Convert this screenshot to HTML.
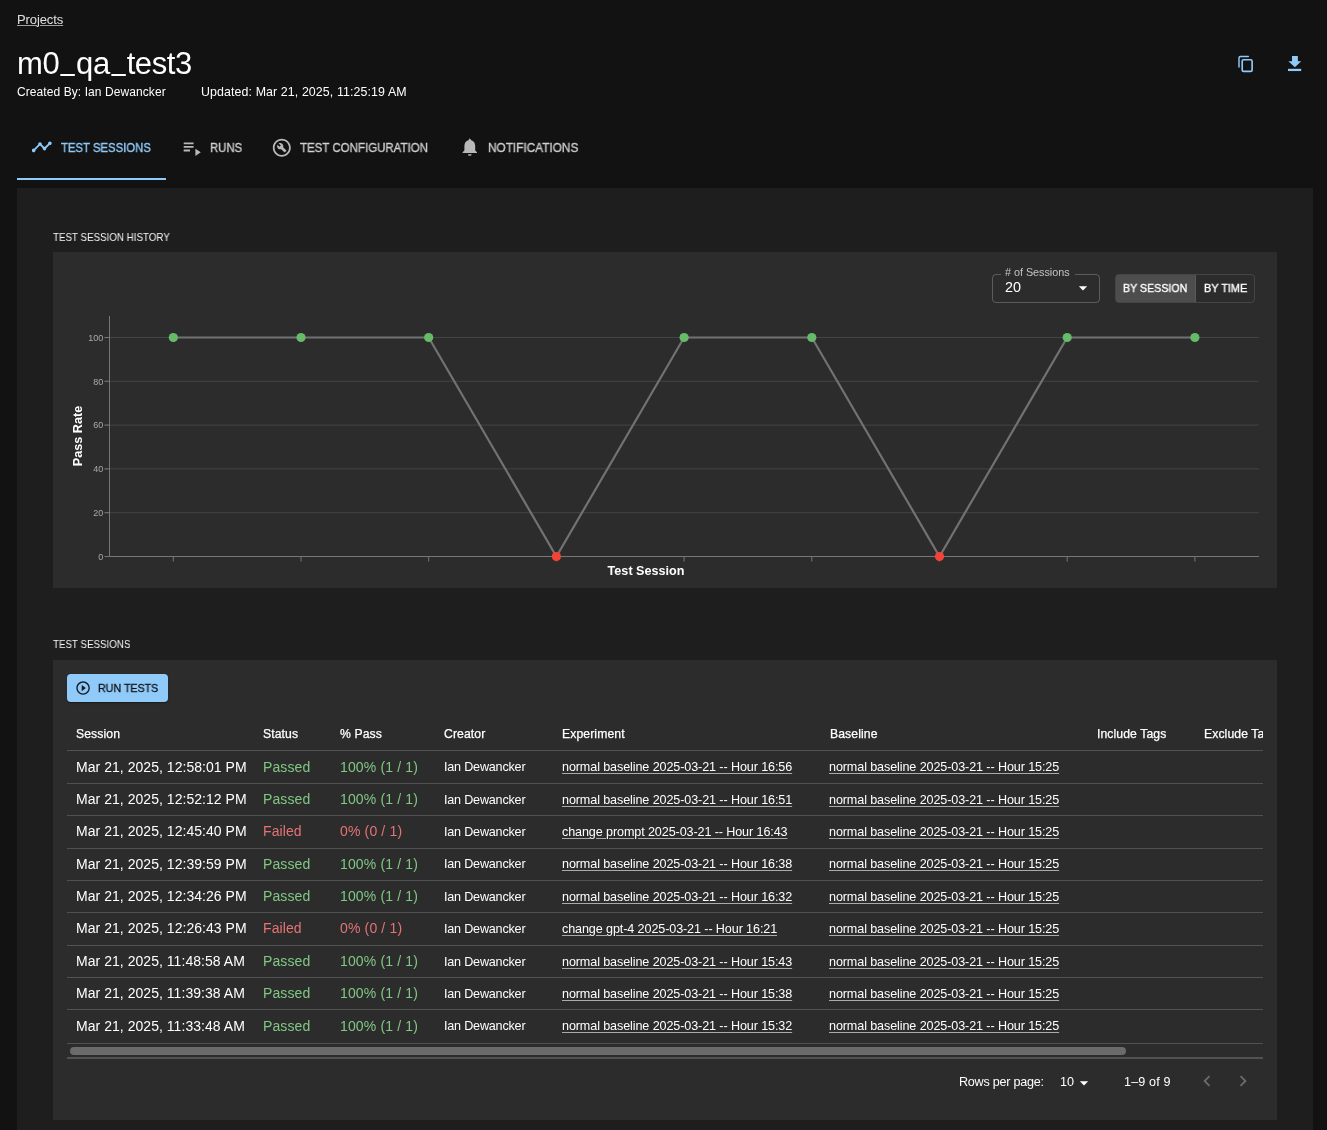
<!DOCTYPE html>
<html><head><meta charset="utf-8"><title>m0_qa_test3</title>
<style>
*{box-sizing:border-box;margin:0;padding:0}
html,body{width:1327px;height:1130px;overflow:hidden;background:#121212;font-family:"Liberation Sans",sans-serif;color:#fff}
.t,.abs{position:absolute;white-space:nowrap;line-height:normal}
.t,svg{will-change:transform}
.b{position:absolute}
.u{text-decoration:underline;text-underline-offset:2px;text-decoration-thickness:1px;text-decoration-color:rgba(255,255,255,0.6)}
</style></head>
<body>
<div class="t u" style="left:17px;top:12.43px;font-size:13px;color:rgba(255,255,255,0.87);letter-spacing:-0.1px;text-underline-offset:1.3px;">Projects</div>
<div class="t" style="left:16.7px;top:45.95px;font-size:31px;color:#fff;letter-spacing:-0.4px;">m0<span style="display:inline-block;transform:translateY(-3.8px) scaleX(0.8)">_</span>qa<span style="display:inline-block;transform:translateY(-3.8px) scaleX(0.8)">_</span>test3</div>
<div class="t" style="left:17px;top:84.94px;font-size:12px;color:#fff;letter-spacing:0.08px;">Created By: Ian Dewancker</div>
<div class="t" style="left:201.4px;top:84.58px;font-size:12.4px;color:#fff;letter-spacing:0.1px;">Updated: Mar 21, 2025, 11:25:19 AM</div>
<svg class="abs" style="left:0;top:0" width="1327" height="100"><path d="M1239 67 V57.9 Q1239 56.5 1240.4 56.5 H1248.3" fill="none" stroke="#90caf9" stroke-width="1.45" stroke-linecap="round"/><rect x="1242.2" y="59.75" width="9.9" height="11.65" rx="1.4" fill="none" stroke="#90caf9" stroke-width="1.65"/><path d="M1292 56 H1297.85 V61.3 H1301.2 L1294.9 67.3 L1288.4 61.3 H1292 Z" fill="#90caf9"/><rect x="1288" y="68.8" width="13.2" height="2.25" fill="#90caf9"/></svg>
<svg class="abs" style="left:30.7px;top:136.2px" width="21.6" height="21.6" viewBox="0 0 24 24"><path fill="#90caf9" d="M23 8c0 1.1-.9 2-2 2-.18 0-.35-.02-.51-.07l-3.56 3.55c.05.16.07.34.07.52 0 1.1-.9 2-2 2s-2-.9-2-2c0-.18.02-.36.07-.52l-2.55-2.55c-.16.05-.34.07-.52.07s-.36-.02-.52-.07l-4.55 4.56c.05.16.07.33.07.51 0 1.1-.9 2-2 2s-2-.9-2-2 .9-2 2-2c.18 0 .35.02.51.07l4.56-4.55C8.02 9.36 8 9.18 8 9c0-1.1.9-2 2-2s2 .9 2 2c0 .18-.02.36-.07.52l2.55 2.55c.16-.05.34-.07.52-.07s.36.02.52.07l3.55-3.56C19.02 8.35 19 8.18 19 8c0-1.1.9-2 2-2s2 .9 2 2z"/></svg>
<div class="t" style="left:61px;top:140.80px;font-size:12.6px;color:#90caf9;transform:scaleX(0.9);transform-origin:0 0;-webkit-text-stroke:0.35px currentColor;">TEST SESSIONS</div>
<svg class="abs" style="left:181px;top:137px" width="21.6" height="21.6" viewBox="0 0 24 24"><path fill="rgba(255,255,255,0.7)" d="M3 10h11v2H3zm0-4h11v2H3zm0 8h7v2H3zm13-1v8l6-4z"/></svg>
<div class="t" style="left:209.5px;top:140.80px;font-size:12.6px;color:rgba(255,255,255,0.7);transform:scaleX(0.902);transform-origin:0 0;-webkit-text-stroke:0.35px currentColor;">RUNS</div>
<svg class="abs" style="left:271.05px;top:136.95px" width="21.6" height="21.6" viewBox="0 0 24 24"><path fill="rgba(255,255,255,0.7)" d="M12 2C6.48 2 2 6.48 2 12s4.48 10 10 10 10-4.48 10-10S17.52 2 12 2zm0 18c-4.41 0-8-3.59-8-8s3.59-8 8-8 8 3.59 8 8-3.59 8-8 8z"/><path fill="rgba(255,255,255,0.7)" d="M13.49 11.38c.43-1.22.17-2.64-.81-3.62-1.11-1.11-2.79-1.3-4.1-.59l2.35 2.35-1.41 1.41-2.35-2.35c-.71 1.32-.52 2.99.59 4.1.98.98 2.4 1.24 3.62.81l3.41 3.41c.2.2.51.2.71 0l1.4-1.4c.2-.2.2-.51 0-.71l-3.41-3.41z"/></svg>
<div class="t" style="left:300.3px;top:140.80px;font-size:12.6px;color:rgba(255,255,255,0.7);transform:scaleX(0.913);transform-origin:0 0;-webkit-text-stroke:0.35px currentColor;">TEST CONFIGURATION</div>
<svg class="abs" style="left:459.3px;top:136.3px" width="21.6" height="21.6" viewBox="0 0 24 24"><path fill="rgba(255,255,255,0.7)" d="M12 22c1.1 0 2-.6 2-1.8h-4c0 1.2.89 1.8 2 1.8zM12 2.5 L13.6 4.7 C16.4 5.4 18 7.9 18 11 v5 l2 2 v1 H4 v-1 l2-2 v-5 C6 7.9 7.6 5.4 10.4 4.7 Z"/></svg>
<div class="t" style="left:488px;top:140.80px;font-size:12.6px;color:rgba(255,255,255,0.7);transform:scaleX(0.938);transform-origin:0 0;-webkit-text-stroke:0.35px currentColor;">NOTIFICATIONS</div>
<div class="b" style="left:17px;top:178.4px;width:149px;height:1.8px;background:#90caf9"></div>
<div class="b" style="left:17px;top:188px;width:1296px;height:960px;background:#1e1e1e"></div>
<div class="t" style="left:53px;top:231.41px;font-size:10.6px;color:rgba(255,255,255,0.96);transform:scaleX(0.923);transform-origin:0 0;">TEST SESSION HISTORY</div>
<div class="b" style="left:53px;top:252px;width:1224px;height:336px;background:#2c2c2c"></div>
<svg class="abs" style="left:0;top:0" width="1327" height="1130"><line x1="104.5" x2="1259" y1="512.7" y2="512.7" stroke="#444" stroke-width="1"/><line x1="104.5" x2="109.5" y1="512.7" y2="512.7" stroke="#777" stroke-width="1"/><line x1="104.5" x2="1259" y1="468.9" y2="468.9" stroke="#444" stroke-width="1"/><line x1="104.5" x2="109.5" y1="468.9" y2="468.9" stroke="#777" stroke-width="1"/><line x1="104.5" x2="1259" y1="425.1" y2="425.1" stroke="#444" stroke-width="1"/><line x1="104.5" x2="109.5" y1="425.1" y2="425.1" stroke="#777" stroke-width="1"/><line x1="104.5" x2="1259" y1="381.3" y2="381.3" stroke="#444" stroke-width="1"/><line x1="104.5" x2="109.5" y1="381.3" y2="381.3" stroke="#777" stroke-width="1"/><line x1="104.5" x2="1259" y1="337.5" y2="337.5" stroke="#444" stroke-width="1"/><line x1="104.5" x2="109.5" y1="337.5" y2="337.5" stroke="#777" stroke-width="1"/><line x1="109.5" x2="109.5" y1="316" y2="556.5" stroke="#777" stroke-width="1"/><line x1="104.5" x2="1259" y1="556.5" y2="556.5" stroke="#777" stroke-width="1"/><line x1="173.3" x2="173.3" y1="556.5" y2="561.5" stroke="#777" stroke-width="1"/><line x1="301.0" x2="301.0" y1="556.5" y2="561.5" stroke="#777" stroke-width="1"/><line x1="428.70000000000005" x2="428.70000000000005" y1="556.5" y2="561.5" stroke="#777" stroke-width="1"/><line x1="556.4000000000001" x2="556.4000000000001" y1="556.5" y2="561.5" stroke="#777" stroke-width="1"/><line x1="684.1" x2="684.1" y1="556.5" y2="561.5" stroke="#777" stroke-width="1"/><line x1="811.8" x2="811.8" y1="556.5" y2="561.5" stroke="#777" stroke-width="1"/><line x1="939.5" x2="939.5" y1="556.5" y2="561.5" stroke="#777" stroke-width="1"/><line x1="1067.2" x2="1067.2" y1="556.5" y2="561.5" stroke="#777" stroke-width="1"/><line x1="1194.9" x2="1194.9" y1="556.5" y2="561.5" stroke="#777" stroke-width="1"/><polyline points="173.3,337.5 301.0,337.5 428.70000000000005,337.5 556.4000000000001,556.5 684.1,337.5 811.8,337.5 939.5,556.5 1067.2,337.5 1194.9,337.5" fill="none" stroke="#727272" stroke-width="2.2"/><circle cx="173.3" cy="337.5" r="4.6" fill="#66bb6a"/><circle cx="301.0" cy="337.5" r="4.6" fill="#66bb6a"/><circle cx="428.70000000000005" cy="337.5" r="4.6" fill="#66bb6a"/><circle cx="556.4000000000001" cy="556.5" r="4.6" fill="#f44336"/><circle cx="684.1" cy="337.5" r="4.6" fill="#66bb6a"/><circle cx="811.8" cy="337.5" r="4.6" fill="#66bb6a"/><circle cx="939.5" cy="556.5" r="4.6" fill="#f44336"/><circle cx="1067.2" cy="337.5" r="4.6" fill="#66bb6a"/><circle cx="1194.9" cy="337.5" r="4.6" fill="#66bb6a"/><text x="103.3" y="559.7" text-anchor="end" font-family="Liberation Sans" font-size="9" fill="#aaa">0</text><text x="103.3" y="515.9000000000001" text-anchor="end" font-family="Liberation Sans" font-size="9" fill="#aaa">20</text><text x="103.3" y="472.09999999999997" text-anchor="end" font-family="Liberation Sans" font-size="9" fill="#aaa">40</text><text x="103.3" y="428.3" text-anchor="end" font-family="Liberation Sans" font-size="9" fill="#aaa">60</text><text x="103.3" y="384.5" text-anchor="end" font-family="Liberation Sans" font-size="9" fill="#aaa">80</text><text x="103.3" y="340.7" text-anchor="end" font-family="Liberation Sans" font-size="9" fill="#aaa">100</text><text x="82.3" y="436" transform="rotate(-90 82.3 436)" text-anchor="middle" font-family="Liberation Sans" font-weight="700" font-size="12.65" fill="#fff">Pass Rate</text><text x="646" y="574.8" text-anchor="middle" font-family="Liberation Sans" font-weight="700" font-size="12.6" fill="#fff">Test Session</text></svg>
<div class="b" style="left:992px;top:274px;width:108px;height:28.5px;border:1px solid rgba(255,255,255,0.23);border-radius:4px"></div>
<div class="b" style="left:1001px;top:270px;width:74px;height:8px;background:#2c2c2c"></div>
<div class="t" style="left:1005px;top:266.23px;font-size:10.8px;color:rgba(255,255,255,0.7);letter-spacing:-0.02px;"># of Sessions</div>
<div class="t" style="left:1005px;top:278.77px;font-size:14.4px;color:#fff;">20</div>
<svg class="abs" style="left:1073px;top:278px" width="20" height="20" viewBox="0 0 24 24"><path fill="#fff" d="M7 10l5 5 5-5z"/></svg>
<div class="b" style="left:1115px;top:274px;width:140px;height:28.5px;border:1px solid rgba(255,255,255,0.12);border-radius:4px;overflow:hidden"><div style="position:absolute;left:0;top:0;width:79px;height:100%;background:rgba(255,255,255,0.16)"></div><div style="position:absolute;left:79px;top:0;width:1px;height:100%;background:rgba(255,255,255,0.22)"></div></div>
<div class="t" style="left:1123.3px;top:281.86px;font-size:11.2px;color:#fff;transform:scaleX(0.952);transform-origin:0 0;-webkit-text-stroke:0.35px currentColor;">BY SESSION</div>
<div class="t" style="left:1203.5px;top:281.86px;font-size:11.2px;color:#fff;transform:scaleX(0.975);transform-origin:0 0;-webkit-text-stroke:0.35px currentColor;">BY TIME</div>
<div class="t" style="left:53px;top:638.41px;font-size:10.6px;color:rgba(255,255,255,0.96);transform:scaleX(0.922);transform-origin:0 0;">TEST SESSIONS</div>
<div class="b" style="left:53px;top:660px;width:1224px;height:460px;background:#2c2c2c"></div>
<div class="b" style="left:67px;top:674px;width:101px;height:28px;background:#90caf9;border-radius:4px;box-shadow:0 2px 1px -1px rgba(0,0,0,.2),0 1px 1px 0 rgba(0,0,0,.14),0 1px 3px 0 rgba(0,0,0,.12)"></div>
<svg class="abs" style="left:74.9px;top:679.9px" width="16.2" height="16.2" viewBox="0 0 24 24"><path fill="rgba(0,0,0,0.87)" d="M10 16.5l6-4.5-6-4.5v9zM12 2C6.48 2 2 6.48 2 12s4.48 10 10 10 10-4.48 10-10S17.52 2 12 2zm0 18c-4.41 0-8-3.59-8-8s3.59-8 8-8 8 3.59 8 8-3.59 8-8 8z"/></svg>
<div class="t" style="left:98.3px;top:681.86px;font-size:11.2px;color:rgba(0,0,0,0.87);transform:scaleX(0.952);transform-origin:0 0;-webkit-text-stroke:0.35px currentColor;">RUN TESTS</div>
<div class="b" style="left:67px;top:700px;width:1196px;height:420px;overflow:hidden">
<div class="t" style="left:9px;top:26.96px;font-size:12.2px;color:#fff;-webkit-text-stroke:0.25px currentColor;letter-spacing:0.1px;">Session</div><div class="t" style="left:195.5px;top:26.96px;font-size:12.2px;color:#fff;-webkit-text-stroke:0.25px currentColor;letter-spacing:0.1px;">Status</div><div class="t" style="left:273px;top:26.96px;font-size:12.2px;color:#fff;-webkit-text-stroke:0.25px currentColor;letter-spacing:0.1px;">% Pass</div><div class="t" style="left:377px;top:26.96px;font-size:12.2px;color:#fff;-webkit-text-stroke:0.25px currentColor;letter-spacing:0.1px;">Creator</div><div class="t" style="left:495px;top:26.96px;font-size:12.2px;color:#fff;-webkit-text-stroke:0.25px currentColor;letter-spacing:0.1px;">Experiment</div><div class="t" style="left:762.5px;top:26.96px;font-size:12.2px;color:#fff;-webkit-text-stroke:0.25px currentColor;letter-spacing:0.1px;">Baseline</div><div class="t" style="left:1030px;top:26.96px;font-size:12.2px;color:#fff;-webkit-text-stroke:0.25px currentColor;letter-spacing:0.1px;">Include Tags</div><div class="t" style="left:1137px;top:26.96px;font-size:12.2px;color:#fff;-webkit-text-stroke:0.25px currentColor;letter-spacing:0.1px;">Exclude Tags</div><div class="b" style="left:0;top:50px;width:1196px;height:1px;background:#515151"></div><div class="b" style="left:0;top:83px;width:1196px;height:1px;background:#515151"></div><div class="b" style="left:0;top:115px;width:1196px;height:1px;background:#515151"></div><div class="b" style="left:0;top:147.5px;width:1196px;height:1px;background:#515151"></div><div class="b" style="left:0;top:180px;width:1196px;height:1px;background:#515151"></div><div class="b" style="left:0;top:212px;width:1196px;height:1px;background:#515151"></div><div class="b" style="left:0;top:245px;width:1196px;height:1px;background:#515151"></div><div class="b" style="left:0;top:277px;width:1196px;height:1px;background:#515151"></div><div class="b" style="left:0;top:309px;width:1196px;height:1px;background:#515151"></div><div class="b" style="left:0;top:343px;width:1196px;height:1px;background:#515151"></div><div class="t" style="left:9px;top:58.63px;font-size:14px;color:#fff;letter-spacing:0.04px;">Mar 21, 2025, 12:58:01 PM</div><div class="t" style="left:195.5px;top:58.63px;font-size:14px;color:#81c784;letter-spacing:0.1px;">Passed</div><div class="t" style="left:273px;top:58.63px;font-size:14px;color:#81c784;letter-spacing:0.15px;">100% (1 / 1)</div><div class="t" style="left:377px;top:60.40px;font-size:12.6px;color:#fff;letter-spacing:-0.2px;">Ian Dewancker</div><div class="t" style="left:495px;top:60.40px;font-size:12.6px;color:#fff;letter-spacing:-0.11px;text-decoration:underline;text-underline-offset:2px;text-decoration-color:rgba(255,255,255,0.6);">normal baseline 2025-03-21 -- Hour 16:56</div><div class="t" style="left:761.8px;top:60.40px;font-size:12.6px;color:#fff;letter-spacing:-0.11px;text-decoration:underline;text-underline-offset:2px;text-decoration-color:rgba(255,255,255,0.6);">normal baseline 2025-03-21 -- Hour 15:25</div><div class="t" style="left:9px;top:90.99px;font-size:14px;color:#fff;letter-spacing:0.04px;">Mar 21, 2025, 12:52:12 PM</div><div class="t" style="left:195.5px;top:90.99px;font-size:14px;color:#81c784;letter-spacing:0.1px;">Passed</div><div class="t" style="left:273px;top:90.99px;font-size:14px;color:#81c784;letter-spacing:0.15px;">100% (1 / 1)</div><div class="t" style="left:377px;top:92.76px;font-size:12.6px;color:#fff;letter-spacing:-0.2px;">Ian Dewancker</div><div class="t" style="left:495px;top:92.76px;font-size:12.6px;color:#fff;letter-spacing:-0.11px;text-decoration:underline;text-underline-offset:2px;text-decoration-color:rgba(255,255,255,0.6);">normal baseline 2025-03-21 -- Hour 16:51</div><div class="t" style="left:761.8px;top:92.76px;font-size:12.6px;color:#fff;letter-spacing:-0.11px;text-decoration:underline;text-underline-offset:2px;text-decoration-color:rgba(255,255,255,0.6);">normal baseline 2025-03-21 -- Hour 15:25</div><div class="t" style="left:9px;top:123.35px;font-size:14px;color:#fff;letter-spacing:0.04px;">Mar 21, 2025, 12:45:40 PM</div><div class="t" style="left:195.5px;top:123.35px;font-size:14px;color:#e57373;letter-spacing:0.1px;">Failed</div><div class="t" style="left:273px;top:123.35px;font-size:14px;color:#e57373;letter-spacing:0.15px;">0% (0 / 1)</div><div class="t" style="left:377px;top:125.12px;font-size:12.6px;color:#fff;letter-spacing:-0.2px;">Ian Dewancker</div><div class="t" style="left:495px;top:125.12px;font-size:12.6px;color:#fff;letter-spacing:-0.11px;text-decoration:underline;text-underline-offset:2px;text-decoration-color:rgba(255,255,255,0.6);">change prompt 2025-03-21 -- Hour 16:43</div><div class="t" style="left:761.8px;top:125.12px;font-size:12.6px;color:#fff;letter-spacing:-0.11px;text-decoration:underline;text-underline-offset:2px;text-decoration-color:rgba(255,255,255,0.6);">normal baseline 2025-03-21 -- Hour 15:25</div><div class="t" style="left:9px;top:155.71px;font-size:14px;color:#fff;letter-spacing:0.04px;">Mar 21, 2025, 12:39:59 PM</div><div class="t" style="left:195.5px;top:155.71px;font-size:14px;color:#81c784;letter-spacing:0.1px;">Passed</div><div class="t" style="left:273px;top:155.71px;font-size:14px;color:#81c784;letter-spacing:0.15px;">100% (1 / 1)</div><div class="t" style="left:377px;top:157.48px;font-size:12.6px;color:#fff;letter-spacing:-0.2px;">Ian Dewancker</div><div class="t" style="left:495px;top:157.48px;font-size:12.6px;color:#fff;letter-spacing:-0.11px;text-decoration:underline;text-underline-offset:2px;text-decoration-color:rgba(255,255,255,0.6);">normal baseline 2025-03-21 -- Hour 16:38</div><div class="t" style="left:761.8px;top:157.48px;font-size:12.6px;color:#fff;letter-spacing:-0.11px;text-decoration:underline;text-underline-offset:2px;text-decoration-color:rgba(255,255,255,0.6);">normal baseline 2025-03-21 -- Hour 15:25</div><div class="t" style="left:9px;top:188.07px;font-size:14px;color:#fff;letter-spacing:0.04px;">Mar 21, 2025, 12:34:26 PM</div><div class="t" style="left:195.5px;top:188.07px;font-size:14px;color:#81c784;letter-spacing:0.1px;">Passed</div><div class="t" style="left:273px;top:188.07px;font-size:14px;color:#81c784;letter-spacing:0.15px;">100% (1 / 1)</div><div class="t" style="left:377px;top:189.84px;font-size:12.6px;color:#fff;letter-spacing:-0.2px;">Ian Dewancker</div><div class="t" style="left:495px;top:189.84px;font-size:12.6px;color:#fff;letter-spacing:-0.11px;text-decoration:underline;text-underline-offset:2px;text-decoration-color:rgba(255,255,255,0.6);">normal baseline 2025-03-21 -- Hour 16:32</div><div class="t" style="left:761.8px;top:189.84px;font-size:12.6px;color:#fff;letter-spacing:-0.11px;text-decoration:underline;text-underline-offset:2px;text-decoration-color:rgba(255,255,255,0.6);">normal baseline 2025-03-21 -- Hour 15:25</div><div class="t" style="left:9px;top:220.43px;font-size:14px;color:#fff;letter-spacing:0.04px;">Mar 21, 2025, 12:26:43 PM</div><div class="t" style="left:195.5px;top:220.43px;font-size:14px;color:#e57373;letter-spacing:0.1px;">Failed</div><div class="t" style="left:273px;top:220.43px;font-size:14px;color:#e57373;letter-spacing:0.15px;">0% (0 / 1)</div><div class="t" style="left:377px;top:222.20px;font-size:12.6px;color:#fff;letter-spacing:-0.2px;">Ian Dewancker</div><div class="t" style="left:495px;top:222.20px;font-size:12.6px;color:#fff;letter-spacing:-0.11px;text-decoration:underline;text-underline-offset:2px;text-decoration-color:rgba(255,255,255,0.6);">change gpt-4 2025-03-21 -- Hour 16:21</div><div class="t" style="left:761.8px;top:222.20px;font-size:12.6px;color:#fff;letter-spacing:-0.11px;text-decoration:underline;text-underline-offset:2px;text-decoration-color:rgba(255,255,255,0.6);">normal baseline 2025-03-21 -- Hour 15:25</div><div class="t" style="left:9px;top:252.79px;font-size:14px;color:#fff;letter-spacing:0.04px;">Mar 21, 2025, 11:48:58 AM</div><div class="t" style="left:195.5px;top:252.79px;font-size:14px;color:#81c784;letter-spacing:0.1px;">Passed</div><div class="t" style="left:273px;top:252.79px;font-size:14px;color:#81c784;letter-spacing:0.15px;">100% (1 / 1)</div><div class="t" style="left:377px;top:254.56px;font-size:12.6px;color:#fff;letter-spacing:-0.2px;">Ian Dewancker</div><div class="t" style="left:495px;top:254.56px;font-size:12.6px;color:#fff;letter-spacing:-0.11px;text-decoration:underline;text-underline-offset:2px;text-decoration-color:rgba(255,255,255,0.6);">normal baseline 2025-03-21 -- Hour 15:43</div><div class="t" style="left:761.8px;top:254.56px;font-size:12.6px;color:#fff;letter-spacing:-0.11px;text-decoration:underline;text-underline-offset:2px;text-decoration-color:rgba(255,255,255,0.6);">normal baseline 2025-03-21 -- Hour 15:25</div><div class="t" style="left:9px;top:285.15px;font-size:14px;color:#fff;letter-spacing:0.04px;">Mar 21, 2025, 11:39:38 AM</div><div class="t" style="left:195.5px;top:285.15px;font-size:14px;color:#81c784;letter-spacing:0.1px;">Passed</div><div class="t" style="left:273px;top:285.15px;font-size:14px;color:#81c784;letter-spacing:0.15px;">100% (1 / 1)</div><div class="t" style="left:377px;top:286.92px;font-size:12.6px;color:#fff;letter-spacing:-0.2px;">Ian Dewancker</div><div class="t" style="left:495px;top:286.92px;font-size:12.6px;color:#fff;letter-spacing:-0.11px;text-decoration:underline;text-underline-offset:2px;text-decoration-color:rgba(255,255,255,0.6);">normal baseline 2025-03-21 -- Hour 15:38</div><div class="t" style="left:761.8px;top:286.92px;font-size:12.6px;color:#fff;letter-spacing:-0.11px;text-decoration:underline;text-underline-offset:2px;text-decoration-color:rgba(255,255,255,0.6);">normal baseline 2025-03-21 -- Hour 15:25</div><div class="t" style="left:9px;top:317.51px;font-size:14px;color:#fff;letter-spacing:0.04px;">Mar 21, 2025, 11:33:48 AM</div><div class="t" style="left:195.5px;top:317.51px;font-size:14px;color:#81c784;letter-spacing:0.1px;">Passed</div><div class="t" style="left:273px;top:317.51px;font-size:14px;color:#81c784;letter-spacing:0.15px;">100% (1 / 1)</div><div class="t" style="left:377px;top:319.28px;font-size:12.6px;color:#fff;letter-spacing:-0.2px;">Ian Dewancker</div><div class="t" style="left:495px;top:319.28px;font-size:12.6px;color:#fff;letter-spacing:-0.11px;text-decoration:underline;text-underline-offset:2px;text-decoration-color:rgba(255,255,255,0.6);">normal baseline 2025-03-21 -- Hour 15:32</div><div class="t" style="left:761.8px;top:319.28px;font-size:12.6px;color:#fff;letter-spacing:-0.11px;text-decoration:underline;text-underline-offset:2px;text-decoration-color:rgba(255,255,255,0.6);">normal baseline 2025-03-21 -- Hour 15:25</div><div class="b" style="left:3px;top:347px;width:1056px;height:8px;border-radius:4px;background:#6b6b6b"></div><div class="b" style="left:0;top:357px;width:1196px;height:2px;background:#515151"></div>
</div>
<div class="t" style="left:958.5px;top:1074.80px;font-size:12.6px;color:#fff;letter-spacing:-0.24px;">Rows per page:</div>
<div class="t" style="left:1059.5px;top:1074.80px;font-size:12.6px;color:#fff;">10</div>
<svg class="abs" style="left:1074px;top:1073px" width="20" height="20" viewBox="0 0 24 24"><path fill="#fff" d="M7 10l5 5 5-5z"/></svg>
<div class="t" style="left:1124px;top:1074.80px;font-size:12.6px;color:#fff;letter-spacing:0.15px;">1–9 of 9</div>
<svg class="abs" style="left:1196px;top:1070px" width="22" height="22" viewBox="0 0 24 24"><path fill="rgba(255,255,255,0.3)" d="M15.41 7.41L14 6l-6 6 6 6 1.41-1.41L10.83 12z"/></svg>
<svg class="abs" style="left:1232px;top:1070px" width="22" height="22" viewBox="0 0 24 24"><path fill="rgba(255,255,255,0.3)" d="M10 6L8.59 7.41 13.17 12l-4.58 4.59L10 18l6-6z"/></svg>
</body></html>
